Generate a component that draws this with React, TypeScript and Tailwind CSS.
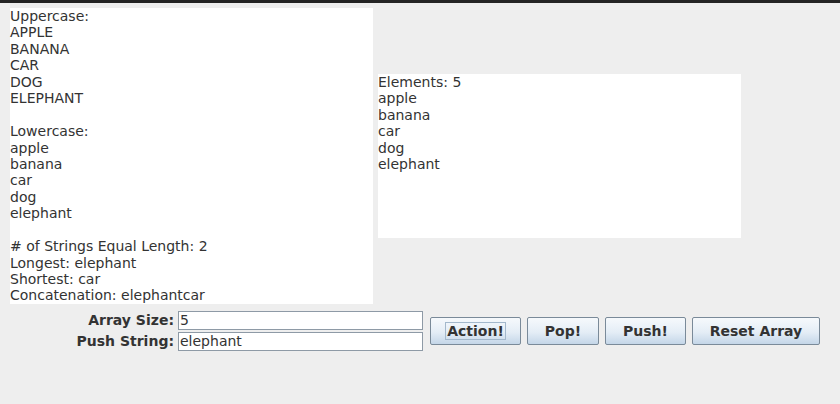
import React from "react";

const leftLines = [
  "Uppercase:",
  "APPLE",
  "BANANA",
  "CAR",
  "DOG",
  "ELEPHANT",
  "",
  "Lowercase:",
  "apple",
  "banana",
  "car",
  "dog",
  "elephant",
  "",
  "# of Strings Equal Length: 2",
  "Longest: elephant",
  "Shortest: car",
  "Concatenation: elephantcar",
];

const rightLines = ["Elements: 5", "apple", "banana", "car", "dog", "elephant"];

const buttons = [
  { label: "Action!", w: "w-[91px]", focus: true },
  { label: "Pop!", w: "w-[72px]", focus: false },
  { label: "Push!", w: "w-[81px]", focus: false },
  { label: "Reset Array", w: "w-[128px]", focus: false },
];

function TextArea({ lines, className }: { lines: string[]; className: string }) {
  return (
    <div className={`bg-white text-[14px] leading-[16.45px] text-[#333] ${className}`}>
      {lines.map((l, i) => (
        <div key={i} className="h-[16.45px] whitespace-pre">
          {l}
        </div>
      ))}
    </div>
  );
}

export default function App() {
  return (
    <div className="w-[840px] h-[404px] bg-[#eeeeee] flex flex-col font-['DejaVu_Sans',sans-serif] overflow-hidden">
      <div className="h-[3px] bg-[#242424]" />
      <div className="flex items-center gap-[5px] pl-[10px] mt-[5px]">
        <TextArea lines={leftLines} className="w-[363px] h-[296px]" />
        <TextArea lines={rightLines} className="w-[363px] h-[164px]" />
      </div>
      <div className="flex items-center mt-[7px]">
        <div className="grid grid-cols-[174px_245px] gap-x-[4px] gap-y-[2px] items-center">
          <label className="h-[19px] text-right text-[14px] leading-[19px] font-bold text-[#333]">Array Size:</label>
          <div className="h-[19px] bg-white border border-[#8e9aa6] pl-[1px] text-[14px] leading-[17px] text-[#333]">5</div>
          <label className="h-[19px] text-right text-[14px] leading-[19px] font-bold text-[#333]">Push String:</label>
          <div className="h-[19px] bg-white border border-[#8e9aa6] pl-[1px] text-[14px] leading-[17px] text-[#333]">elephant</div>
        </div>
        <div className="flex gap-[6px] ml-[7px]">
          {buttons.map((b) => (
            <button
              key={b.label}
              className={`${b.w} h-[28px] border border-[#7a8a99] rounded-[2px] bg-[linear-gradient(to_bottom,#f6f9fc,#e4edf6_55%,#c4d6e8)] text-[14px] font-bold text-[#333] flex items-center justify-center`}
            >
              <span className={b.focus ? "outline outline-1 outline-[#a3b8cc] px-[1px] leading-[16px]" : "leading-[16px]"}>
                {b.label}
              </span>
            </button>
          ))}
        </div>
      </div>
    </div>
  );
}
